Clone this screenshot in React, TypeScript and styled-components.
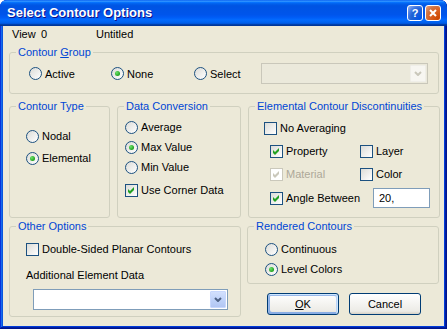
import styled, { createGlobalStyle } from "styled-components";

const Global = createGlobalStyle`
  html, body {
    margin: 0;
    padding: 0;
    background: #ffffff;
  }
  body {
    font-family: "Liberation Sans", Arial, sans-serif;
    font-size: 11px;
    color: #000000;
  }
`;

const Window = styled.div`
  width: 447px;
  height: 329px;
  box-sizing: border-box;
  display: flex;
  flex-direction: column;
  background: #ece9d8;
  border-radius: 7px 7px 0 0;
  overflow: hidden;
  box-shadow: inset -1px -1px #00138c, inset 1px 1px #0831d9,
    inset -2px -2px #001ea0, inset 2px 2px #166aee, inset -3px -3px #003bda,
    inset 3px 3px #0855dd;
`;

const TitleBar = styled.div`
  height: 26px;
  flex: none;
  display: flex;
  align-items: center;
  padding: 0 6px 0 7px;
  background: linear-gradient(
    180deg,
    #0058ee 0%,
    #3593ff 4%,
    #288eff 6%,
    #127dff 8%,
    #036ffc 10%,
    #0262ee 14%,
    #0057e5 20%,
    #0054e3 24%,
    #0055eb 56%,
    #005bf5 66%,
    #026afe 76%,
    #0062ef 86%,
    #0052d6 92%,
    #0040ab 94%,
    #003092 100%
  );
`;

const TitleText = styled.span`
  flex: 1;
  color: #ffffff;
  font-weight: 700;
  font-size: 13px;
  text-shadow: 1px 1px #0f1089;
  padding-bottom: 1px;
`;

const TitleButton = styled.span<{ $close?: boolean }>`
  width: 16px;
  height: 16px;
  box-sizing: border-box;
  margin-left: 2px;
  border: 1px solid #ffffff;
  border-radius: 3px;
  display: flex;
  align-items: center;
  justify-content: center;
  background: ${(p) =>
    p.$close
      ? "radial-gradient(circle at 90% 90%, #cc4600 0%, #dc6527 55%, #cd7546 70%, #f0a07a 100%)"
      : "radial-gradient(circle at 90% 90%, #0054e9 0%, #2263d5 55%, #4479e4 70%, #a3bbec 100%)"};
  color: #ffffff;
  font-weight: 700;
  font-size: 11px;
`;

const Client = styled.div`
  flex: 1;
  margin: 0 3px 3px;
  padding: 0 5px 0 6px;
  display: flex;
  flex-direction: column;
`;

const InfoRow = styled.div`
  height: 16px;
  line-height: 16px;
  padding-left: 3px;
  display: grid;
  grid-template-columns: 29px 55px auto;
  margin-bottom: 4px;
`;

const GroupBox = styled.fieldset<{ $h: number }>`
  margin: 0;
  padding: 0;
  min-width: 0;
  box-sizing: border-box;
  height: ${(p) => p.$h}px;
  border: 1px solid #d0d0bf;
  border-radius: 3px;
`;

const Legend = styled.legend`
  margin-left: 6px;
  padding: 0 2px;
  color: #0046d5;
  line-height: 13px;
  font-size: 11px;
`;

const Key = styled.span`
  text-decoration: underline;
  text-underline-offset: 1px;
`;

const MiddleRow = styled.div`
  display: grid;
  grid-template-columns: 101px 124px 192px;
  column-gap: 7px;
  margin-top: 6px;
`;

const BottomRow = styled.div`
  display: grid;
  grid-template-columns: 232px 192px;
  column-gap: 6px;
  margin-top: 2px;
  align-items: start;
`;

const RightColumn = styled.div`
  display: flex;
  flex-direction: column;
`;

const GroupRow = styled.div`
  display: grid;
  grid-template-columns: 82px 83px 67px 167px;
  align-items: center;
  padding: 4px 0 0 19px;
`;

const Stack = styled.div<{ $top: number; $left: number }>`
  display: flex;
  flex-direction: column;
  align-items: flex-start;
  padding: ${(p) => p.$top}px 0 0 ${(p) => p.$left}px;
`;

const Option = styled.label<{ $gap?: number; $disabled?: boolean }>`
  display: flex;
  align-items: center;
  gap: 3px;
  height: 16px;
  line-height: 16px;
  white-space: nowrap;
  margin-top: ${(p) => p.$gap ?? 0}px;
  color: ${(p) => (p.$disabled ? "#aca899" : "#000000")};
`;

const RadioCircle = styled.span<{ $on?: boolean }>`
  width: 13px;
  height: 13px;
  flex: none;
  box-sizing: border-box;
  border-radius: 50%;
  border: 1px solid #1c5180;
  background: linear-gradient(135deg, #dcdcd7, #ffffff);
  display: flex;
  align-items: center;
  justify-content: center;

  &::after {
    content: "";
    width: 5px;
    height: 5px;
    border-radius: 50%;
    background: ${(p) =>
      p.$on
        ? "radial-gradient(circle at 35% 35%, #6de36a, #21a121 70%)"
        : "transparent"};
  }
`;

const CheckBox = styled.span<{ $disabled?: boolean }>`
  width: 13px;
  height: 13px;
  flex: none;
  box-sizing: border-box;
  border: 1px solid ${(p) => (p.$disabled ? "#cac8bb" : "#1c5180")};
  background: ${(p) =>
    p.$disabled ? "#ffffff" : "linear-gradient(135deg, #dcdcd7, #ffffff)"};
  display: flex;
  align-items: center;
  justify-content: center;
`;

const CheckGrid = styled.div`
  display: grid;
  grid-template-columns: 90px auto;
  row-gap: 7px;
  padding: 7px 0 0 21px;
`;

const AngleRow = styled.div`
  display: flex;
  align-items: center;
  height: 20px;
  padding-left: 21px;
  margin-top: 6px;
`;

const AngleLabel = styled(Option)`
  width: 103px;
`;

const TextField = styled.div`
  width: 57px;
  height: 20px;
  box-sizing: border-box;
  border: 1px solid #7f9db9;
  background: #ffffff;
  padding-left: 5px;
  line-height: 18px;
`;

const Combo = styled.div<{ $disabled?: boolean; $w: number; $indent?: number }>`
  width: ${(p) => p.$w}px;
  height: 21px;
  box-sizing: border-box;
  margin-left: ${(p) => p.$indent ?? 0}px;
  border: 1px solid ${(p) => (p.$disabled ? "#c9c7ba" : "#7f9db9")};
  background: ${(p) => (p.$disabled ? "#ebe9db" : "#ffffff")};
  display: flex;
  justify-content: flex-end;
  padding: 1px;
`;

const ComboButton = styled.span<{ $disabled?: boolean }>`
  width: 16px;
  box-sizing: border-box;
  border: 1px solid ${(p) => (p.$disabled ? "#efeee8" : "#c7d7fd")};
  border-radius: 1px;
  background: ${(p) =>
    p.$disabled
      ? "#f7f6f1"
      : "linear-gradient(180deg, #d3e0fd 0%, #bcd0f8 60%, #b2c6f3 100%)"};
  display: flex;
  align-items: center;
  justify-content: center;
`;

const FieldLabel = styled.div`
  height: 16px;
  line-height: 16px;
  margin: 10px 0 6px;
`;

const ButtonRow = styled.div`
  display: flex;
  gap: 10px;
  padding: 9px 0 0 20px;
`;

const Button = styled.button<{ $default?: boolean }>`
  width: 72px;
  height: 22px;
  box-sizing: border-box;
  padding: 0;
  border: 1px solid #003c74;
  border-radius: 3px;
  background: linear-gradient(180deg, #ffffff, #ecebe6 86%, #d6d0c5);
  font-family: "Liberation Sans", Arial, sans-serif;
  font-size: 11px;
  color: #000000;
  display: flex;
  align-items: center;
  justify-content: center;
  box-shadow: ${(p) =>
    p.$default
      ? "inset -1px 1px #cee7ff, inset 1px 2px #98b8ea, inset -2px 2px #bcd4f6, inset 1px -1px #89ade4, inset 2px -2px #89ade4"
      : "none"};
`;

const Chevron = ({ color }: { color: string }) => (
  <svg width="8" height="5" viewBox="0 0 8 5">
    <polyline points="1,1 4,4 7,1" fill="none" stroke={color} strokeWidth="2" />
  </svg>
);

const Tick = ({ color }: { color: string }) => (
  <svg width="7" height="7" viewBox="0 0 7 7">
    <path d="M0 2 L2 4 L6 0 L6 3 L2 7 L0 5 Z" fill={color} />
  </svg>
);

function Radio({ label, on, gap }: { label: string; on?: boolean; gap?: number }) {
  return (
    <Option $gap={gap}>
      <RadioCircle $on={on} />
      {label}
    </Option>
  );
}

function Check({
  label,
  on,
  disabled,
  gap,
}: {
  label: string;
  on?: boolean;
  disabled?: boolean;
  gap?: number;
}) {
  return (
    <Option $gap={gap} $disabled={disabled}>
      <CheckBox $disabled={disabled}>
        {on && <Tick color={disabled ? "#cac8bb" : "#21a121"} />}
      </CheckBox>
      {label}
    </Option>
  );
}

export default function App() {
  return (
    <>
      <Global />
      <Window>
        <TitleBar>
          <TitleText>Select Contour Options</TitleText>
          <TitleButton>?</TitleButton>
          <TitleButton $close>
            <svg width="8" height="8" viewBox="0 0 8 8">
              <path d="M1 1 L7 7 M7 1 L1 7" stroke="#ffffff" strokeWidth="2" />
            </svg>
          </TitleButton>
        </TitleBar>

        <Client>
          <InfoRow>
            <span>View</span>
            <span>0</span>
            <span>Untitled</span>
          </InfoRow>

          <GroupBox $h={48}>
            <Legend>
              Contour <Key>G</Key>roup
            </Legend>
            <GroupRow>
              <Radio label="Active" />
              <Radio label="None" on />
              <Radio label="Select" />
              <Combo $disabled $w={167}>
                <ComboButton $disabled>
                  <Chevron color="#c9c7ba" />
                </ComboButton>
              </Combo>
            </GroupRow>
          </GroupBox>

          <MiddleRow>
            <GroupBox $h={118}>
              <Legend>Contour Type</Legend>
              <Stack $top={15} $left={16}>
                <Radio label="Nodal" />
                <Radio label="Elemental" on gap={6} />
              </Stack>
            </GroupBox>

            <GroupBox $h={118}>
              <Legend>Data Conversion</Legend>
              <Stack $top={6} $left={7}>
                <Radio label="Average" />
                <Radio label="Max Value" on gap={4} />
                <Radio label="Min Value" gap={4} />
                <Check label="Use Corner Data" on gap={7} />
              </Stack>
            </GroupBox>

            <GroupBox $h={118}>
              <Legend>Elemental Contour Discontinuities</Legend>
              <Stack $top={7} $left={15}>
                <Check label="No Averaging" />
              </Stack>
              <CheckGrid>
                <Check label="Property" on />
                <Check label="Layer" />
                <Check label="Material" on disabled />
                <Check label="Color" />
              </CheckGrid>
              <AngleRow>
                <AngleLabel as="span">
                  <CheckBox>
                    <Tick color="#21a121" />
                  </CheckBox>
                  Angle Between
                </AngleLabel>
                <TextField>20,</TextField>
              </AngleRow>
            </GroupBox>
          </MiddleRow>

          <BottomRow>
            <GroupBox $h={97}>
              <Legend>Other Options</Legend>
              <Stack $top={8} $left={16}>
                <Check label="Double-Sided Planar Contours" />
                <FieldLabel>Additional Element Data</FieldLabel>
                <Combo $w={195} $indent={7}>
                  <ComboButton>
                    <Chevron color="#4d6185" />
                  </ComboButton>
                </Combo>
              </Stack>
            </GroupBox>

            <RightColumn>
              <GroupBox $h={64}>
                <Legend>Rendered Contours</Legend>
                <Stack $top={8} $left={17}>
                  <Radio label="Continuous" />
                  <Radio label="Level Colors" on gap={4} />
                </Stack>
              </GroupBox>
              <ButtonRow>
                <Button $default>
                  <Key>O</Key>K
                </Button>
                <Button>Cancel</Button>
              </ButtonRow>
            </RightColumn>
          </BottomRow>
        </Client>
      </Window>
    </>
  );
}
